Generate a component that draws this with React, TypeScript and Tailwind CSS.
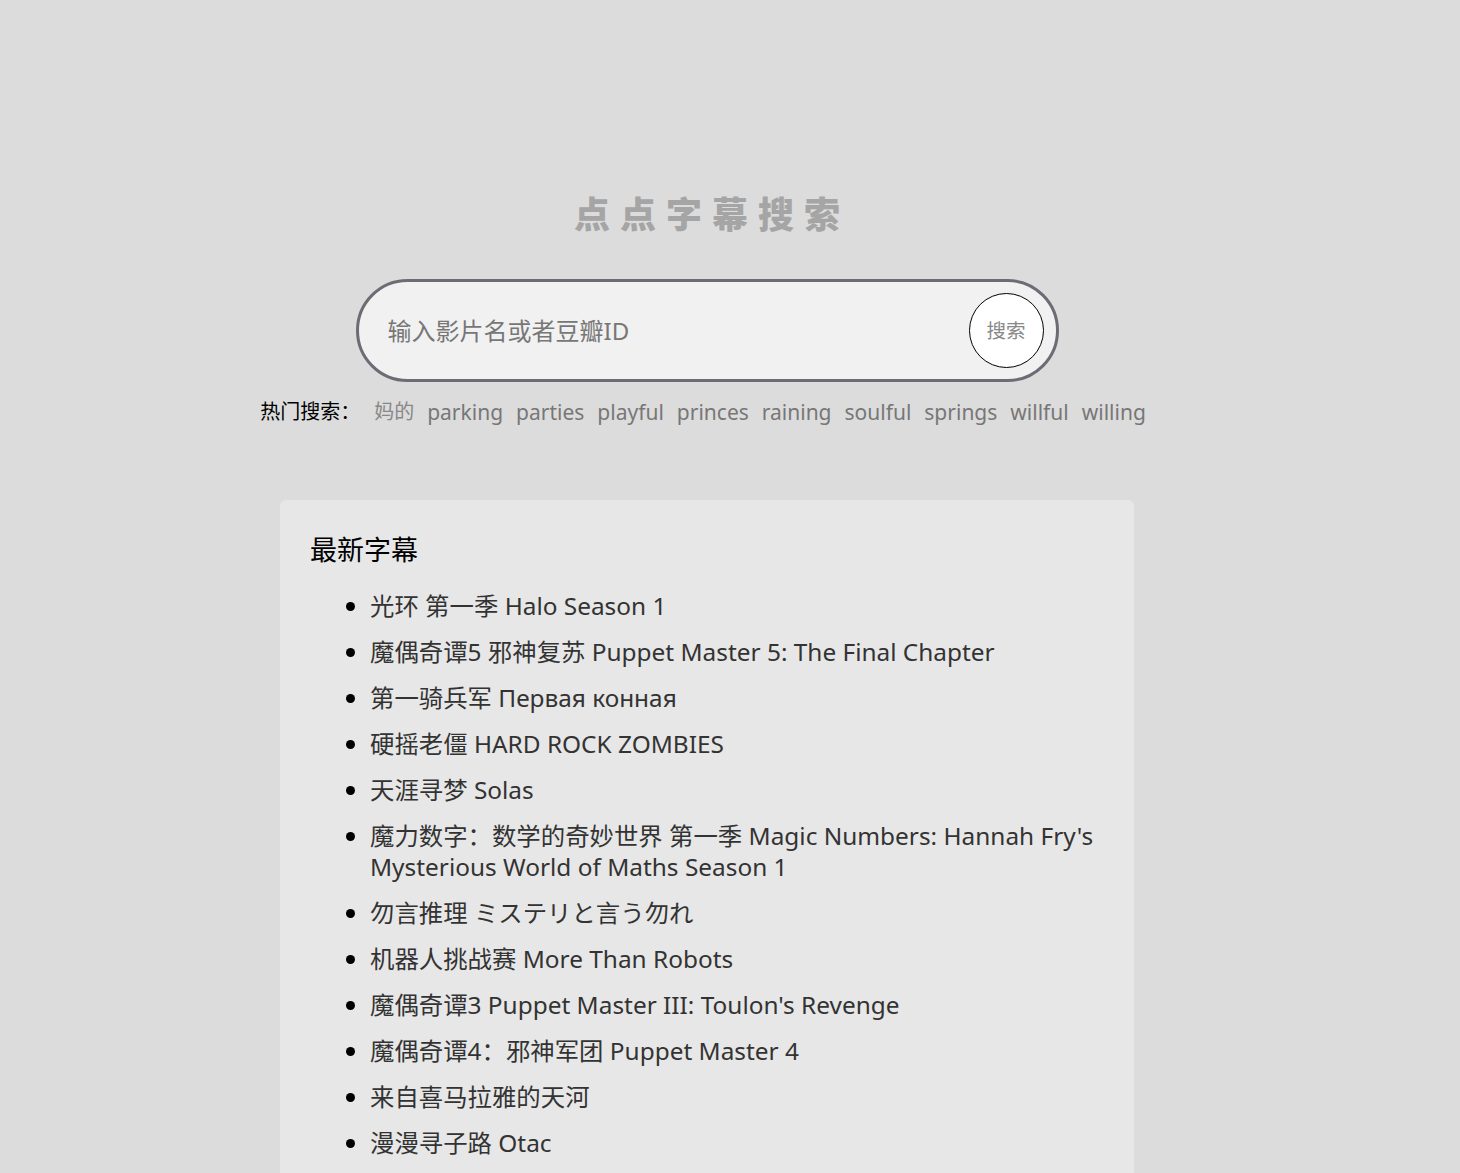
import React from "react";

const hot = ["parking", "parties", "playful", "princes", "raining", "soulful", "springs", "willful", "willing"];
const items = [
  "光环 第一季 Halo Season 1",
  "魔偶奇谭5 邪神复苏 Puppet Master 5: The Final Chapter",
  "第一骑兵军 Первая конная",
  "硬摇老僵 HARD ROCK ZOMBIES",
  "天涯寻梦 Solas",
  "魔力数字：数学的奇妙世界 第一季 Magic Numbers: Hannah Fry's Mysterious World of Maths Season 1",
  "勿言推理 ミステリと言う勿れ",
  "机器人挑战赛 More Than Robots",
  "魔偶奇谭3 Puppet Master III: Toulon's Revenge",
  "魔偶奇谭4：邪神军团 Puppet Master 4",
  "来自喜马拉雅的天河",
  "漫漫寻子路 Otac",
];

export default function App() {
  return (
    <div
      className="min-h-[1173px] bg-[#dcdcdc] pr-[46px] overflow-hidden"
      style={{ fontFamily: '"Noto Sans", "Noto Sans CJK SC", sans-serif' }}
    >
      <div className="flex flex-col items-center pt-[191px]">
        <h1 className="text-[36px] leading-[48px] font-black text-[#a5a5a5] tracking-[10px] pl-[10px]">
          点点字幕搜索
        </h1>
        <div className="mt-[40px] w-[703px] h-[103px] rounded-full border-[3px] border-[#6d6c74] bg-[#f1f1f1] flex items-center pl-[29px] pr-[12px]">
          <span className="flex-1 text-[24px] text-[#777777]">输入影片名或者豆瓣ID</span>
          <div className="w-[75px] h-[75px] rounded-full border border-black bg-white flex items-center justify-center text-[19.5px] text-[#888888]">
            搜索
          </div>
        </div>
        <div className="mt-[15px] mr-[8px] flex items-center text-[20px] leading-[30px]">
          <span className="text-black mr-[14px]">热门搜索：</span>
          <span className="text-[#888888] mr-[13px]">妈的</span>
          {hot.map((h, i) => (
            <span key={h} className={`text-[#777777] text-[21px] ${i < hot.length - 1 ? "mr-[13px]" : ""}`}>{h}</span>
          ))}
        </div>
        <div className="mt-[73px] w-[854px] rounded-[6px] bg-[#e7e7e7] pl-[30px] pr-[40px] pt-[30px] pb-[40px]">
          <h2 className="text-[27px] leading-[40px] text-black">最新字幕</h2>
          <ul className="mt-[20px] list-disc pl-[60px] text-[24.4px] leading-[31px] text-[#333333] flex flex-col gap-[15px] marker:text-black">
            {items.map((t) => (
              <li key={t}>{t}</li>
            ))}
          </ul>
        </div>
      </div>
    </div>
  );
}
